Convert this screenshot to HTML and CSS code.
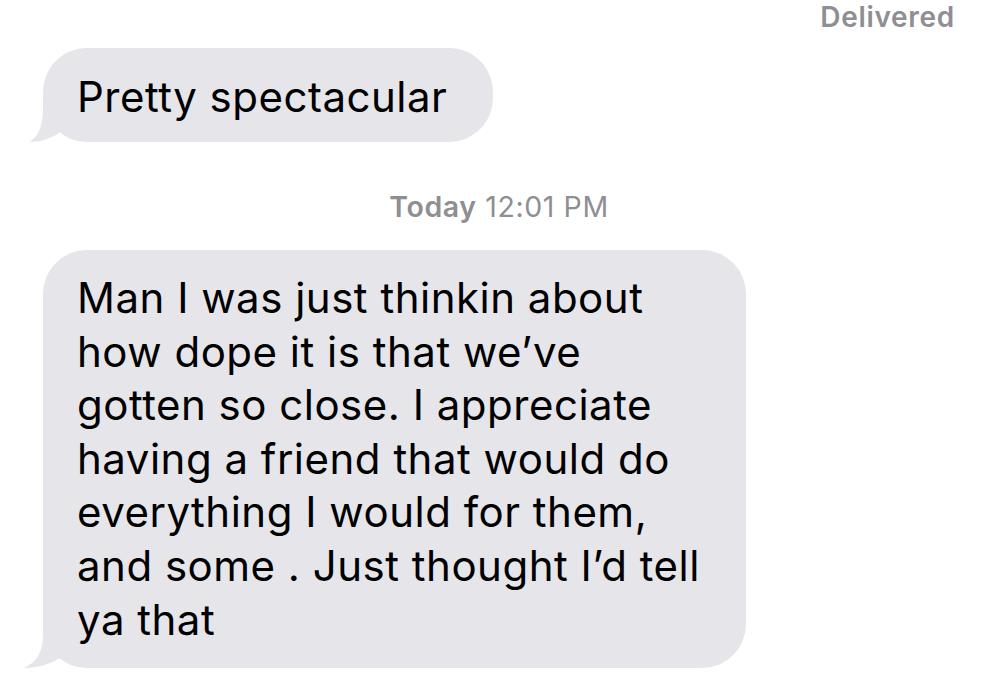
FILE: index.html
```html
<!DOCTYPE html>
<html lang="en">
<head>
<meta charset="utf-8">
<title>Messages</title>
<link rel="stylesheet" href="styles.css">
</head>
<body>
  <div class="thread">
    <div class="status">Delivered</div>

    <div class="bubble bubble-short">
      Pretty spectacular
      <svg class="tail" viewBox="-20 -50 50 50" width="50" height="50" aria-hidden="true">
        <path d="M0 -50 L0 -34 C0 -14 -6 -4 -14 0 C-4 0 8 -3 17 -10 L17 -50 Z"/>
      </svg>
    </div>

    <div class="timestamp"><span class="day">Today</span> 12:01 PM</div>

    <div class="bubble bubble-long">
      Man I was just thinkin about<br>
      how dope it is that we’ve<br>
      gotten so close. I appreciate<br>
      having a friend that would do<br>
      everything I would for them,<br>
      and some . Just thought I’d tell<br>
      ya that
      <svg class="tail" viewBox="-20 -50 50 50" width="50" height="50" aria-hidden="true">
        <path d="M0 -50 L0 -34 C0 -14 -8 -4 -20 0 C-8 0 6 -3 17 -10 L17 -50 Z"/>
      </svg>
    </div>
  </div>
</body>
</html>
```

FILE: styles.css
```css
* {
  box-sizing: border-box;
}

html, body {
  margin: 0;
  padding: 0;
  background: #ffffff;
}

body {
  font-family: Inter, "Liberation Sans", sans-serif;
  color: #000000;
  width: 1000px;
  height: 699px;
  overflow: hidden;
}

.thread {
  display: flex;
  flex-direction: column;
  align-items: flex-start;
  padding: 0 45px 0 43px;
}

.status {
  align-self: flex-end;
  font-size: 28px;
  line-height: 34px;
  font-weight: 600;
  letter-spacing: 0.7px;
  color: #8e8e93;
}

.bubble {
  position: relative;
  background: #e5e5ea;
  border-radius: 44px;
  font-size: 42px;
  line-height: 53.6px;
  font-weight: 400;
  letter-spacing: 0.5px;
}

.bubble-short {
  margin-top: 14px;
  height: 94px;
  padding: 22px 46px 0 34px;
}

.bubble-long {
  margin-top: 26px;
  width: 703px;
  padding: 21px 30px 22px 34px;
}

.tail {
  position: absolute;
  left: -20px;
  bottom: 0;
  fill: #e5e5ea;
}

.timestamp {
  align-self: center;
  margin-top: 48px;
  font-size: 28.5px;
  line-height: 34px;
  letter-spacing: 0.6px;
  color: #8e8e93;
}

.day {
  font-weight: 600;
}
```
